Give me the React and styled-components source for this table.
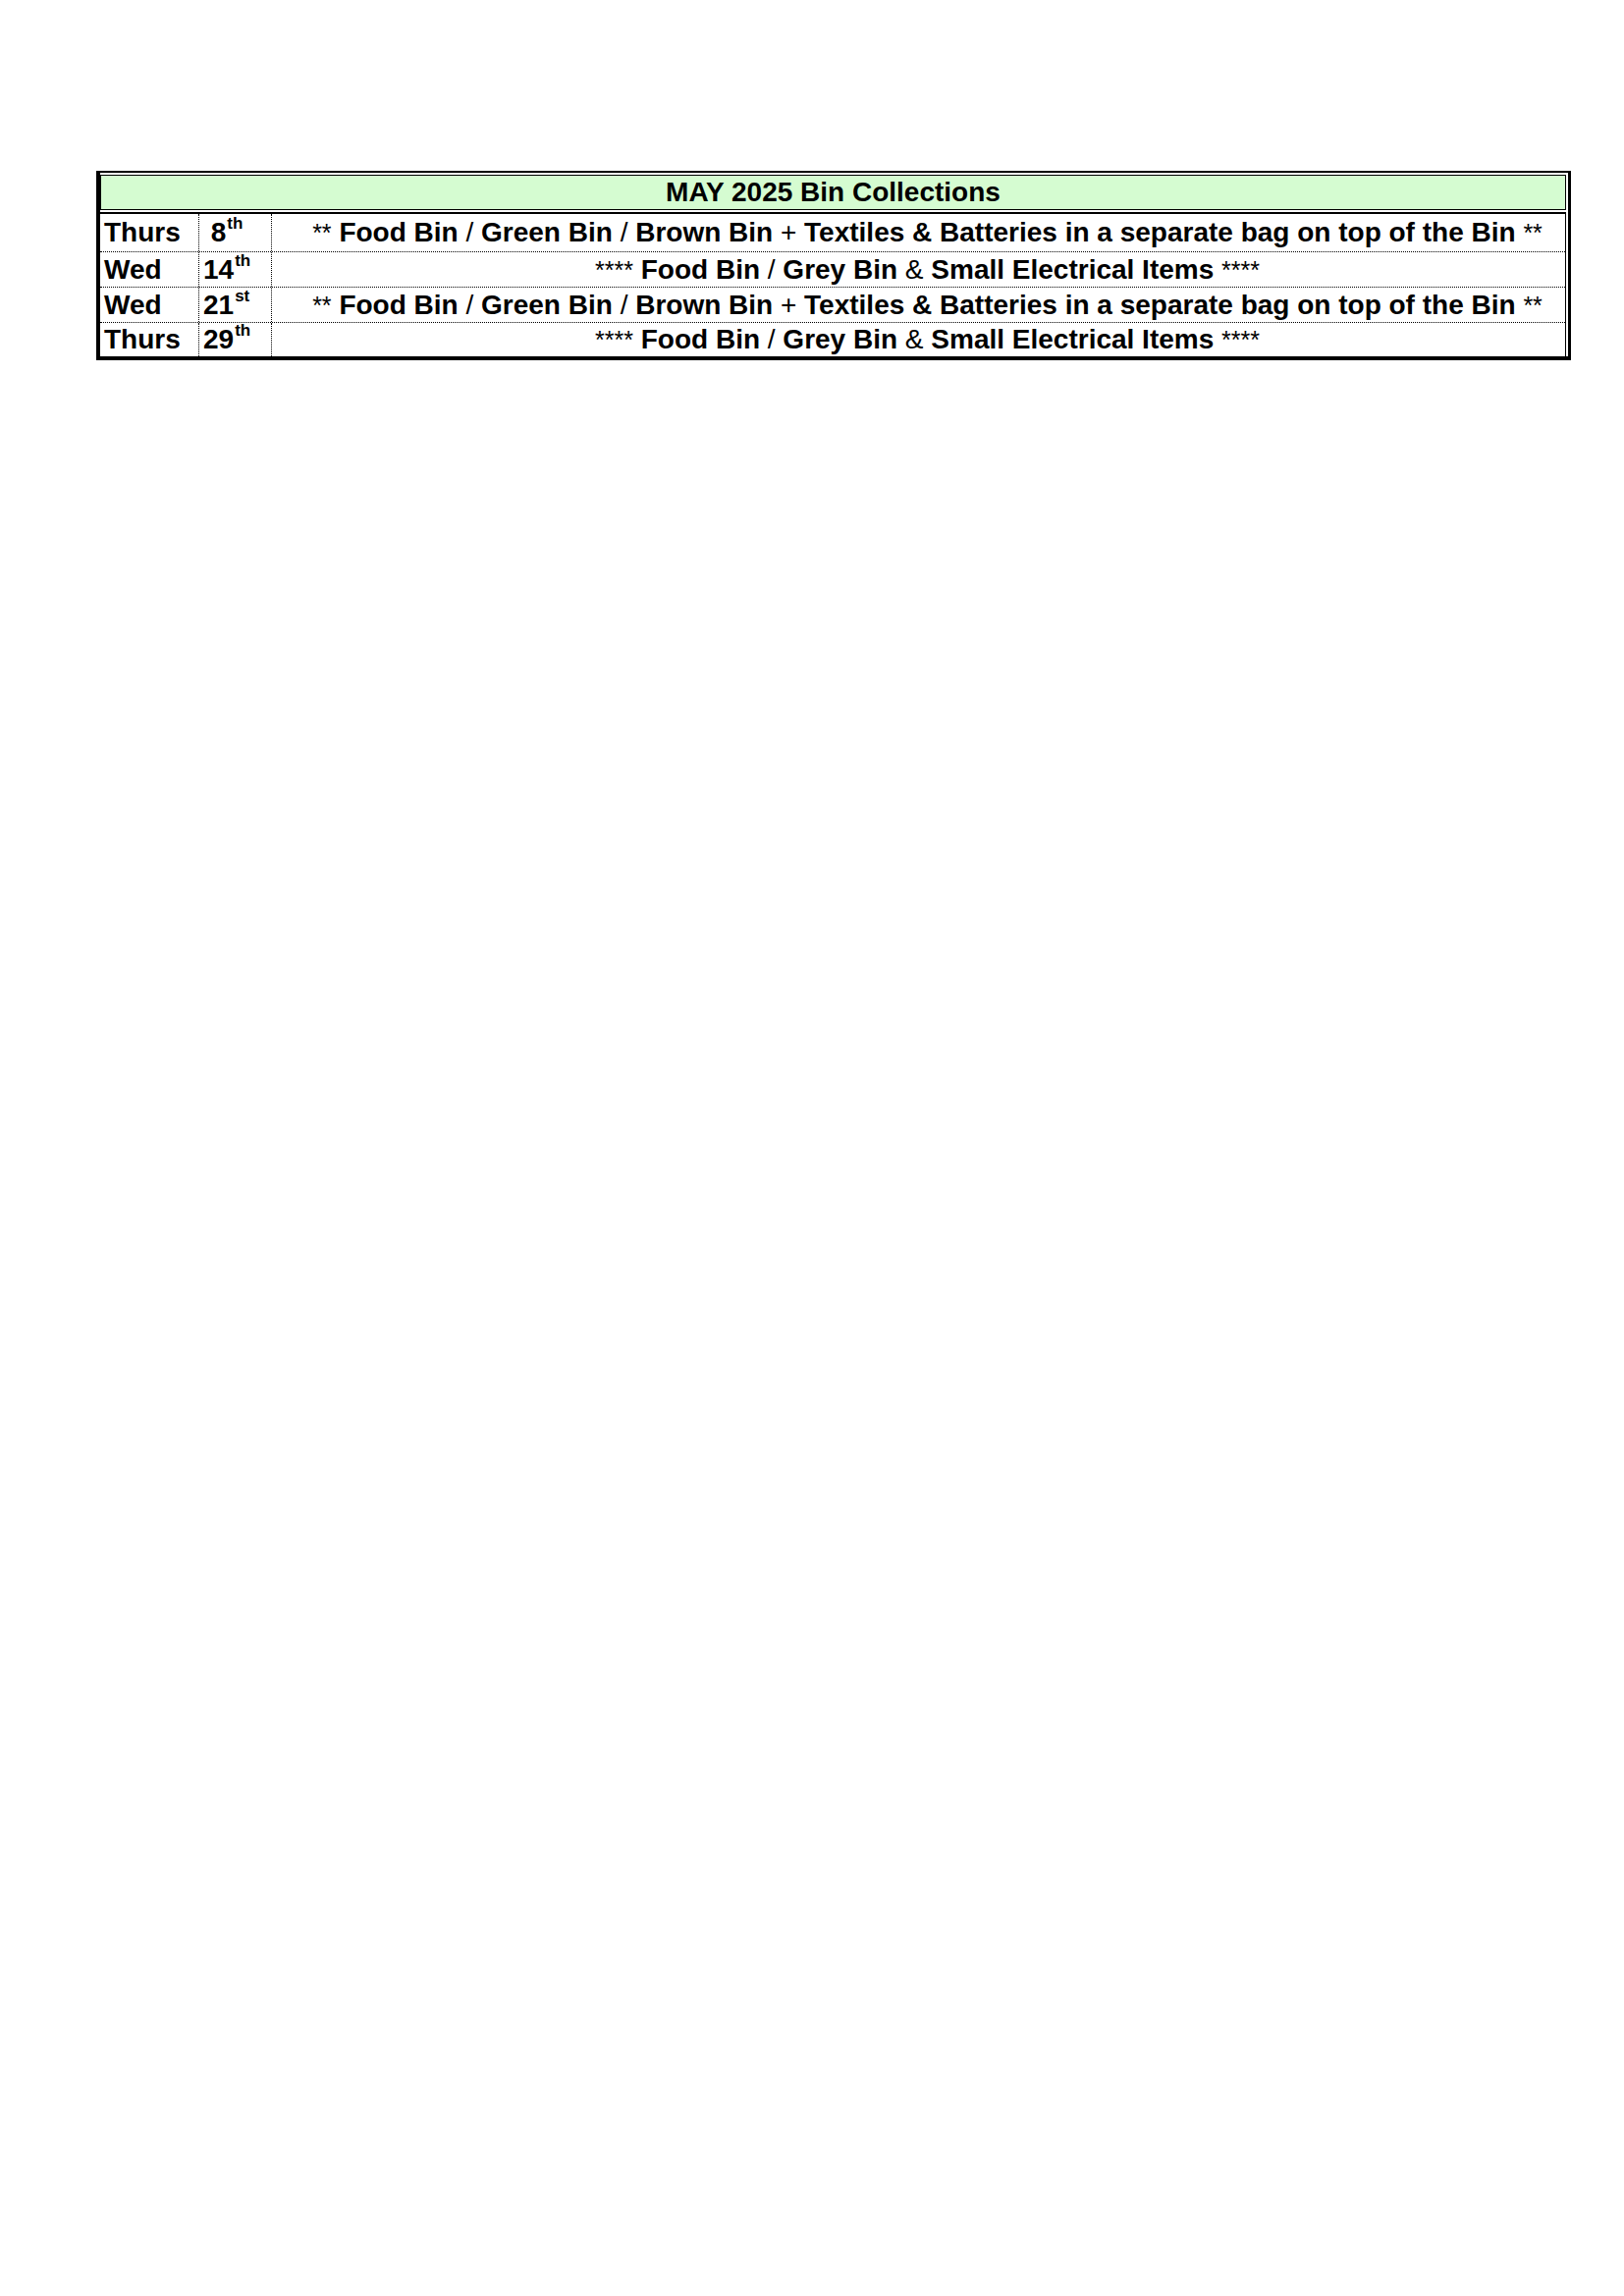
import styled, { createGlobalStyle } from 'styled-components';

const GlobalStyle = createGlobalStyle`
  html, body {
    margin: 0;
    padding: 0;
    background: #ffffff;
  }
  body {
    font-family: "Liberation Sans", Arial, sans-serif;
    color: #000;
  }
`;

const Page = styled.div`
  width: 1654px;
  min-height: 2339px;
  padding: 174px 0 0 98px;
  box-sizing: border-box;
`;

const Frame = styled.div`
  width: 1502px;
  box-sizing: border-box;
  border-style: solid;
  border-color: #000;
  border-width: 2px 3px 4px 4px;
  background: #fff;
`;

const Header = styled.div`
  margin: 2px 2px 2px 0;
  height: 34px;
  border: 1px solid #000;
  background: #d5fcd1;
  display: flex;
  align-items: center;
  justify-content: center;
  font-weight: bold;
  font-size: 28px;
`;

const Rows = styled.div`
  border-top: 2px solid #000;
  margin-right: 2px;
  border-right: 1px solid #000;
`;

const Row = styled.div`
  display: grid;
  grid-template-columns: 101px 74px 1fr;
  height: ${p => p.h}px;
  box-sizing: border-box;
  border-bottom: ${p => (p.last ? 'none' : '1px dotted #000')};
  font-weight: bold;
  font-size: 28px;
`;

const Cell = styled.div`
  display: flex;
  align-items: center;
  padding-left: ${p => p.pl || 0}px;
  border-right: ${p => (p.divider ? '1px dotted #000' : 'none')};
  justify-content: ${p => (p.center ? 'center' : 'flex-start')};
  white-space: nowrap;
  box-sizing: border-box;
`;

const Sup = styled.sup`
  font-size: 17px;
  vertical-align: 0;
  position: relative;
  top: -9px;
  margin-left: 1px;
`;

const Light = styled.span`
  font-weight: normal;
`;

const Stars = styled.span`
  font-weight: normal;
  font-size: 25px;
`;

const rows = [
  { day: 'Thurs', num: '\u00a08', suf: 'th', kind: 'green', h: 39 },
  { day: 'Wed', num: '14', suf: 'th', kind: 'grey', h: 36 },
  { day: 'Wed', num: '21', suf: 'st', kind: 'green', h: 36 },
  { day: 'Thurs', num: '29', suf: 'th', kind: 'grey', h: 34 },
];

const GreenText = () => (
  <span>
    <Stars>**</Stars> Food Bin <Light>/</Light> Green Bin <Light>/</Light> Brown Bin <Light>+</Light> Textiles &amp; Batteries in a separate bag on top of the Bin <Stars>**</Stars>
  </span>
);

const GreyText = () => (
  <span>
    <Stars>****</Stars> Food Bin <Light>/</Light> Grey Bin <Light>&amp;</Light> Small Electrical Items <Stars>****</Stars>
  </span>
);

export default function App() {
  return (
    <>
      <GlobalStyle />
      <Page>
        <Frame>
          <Header>MAY 2025 Bin Collections</Header>
          <Rows>
            {rows.map((r, i) => (
              <Row key={i} h={r.h} last={i === rows.length - 1}>
                <Cell divider pl={4}>{r.day}</Cell>
                <Cell divider pl={4}>
                  {r.num}
                  <Sup>{r.suf}</Sup>
                </Cell>
                <Cell center pl={18}>
                  {r.kind === 'green' ? <GreenText /> : <GreyText />}
                </Cell>
              </Row>
            ))}
          </Rows>
        </Frame>
      </Page>
    </>
  );
}
